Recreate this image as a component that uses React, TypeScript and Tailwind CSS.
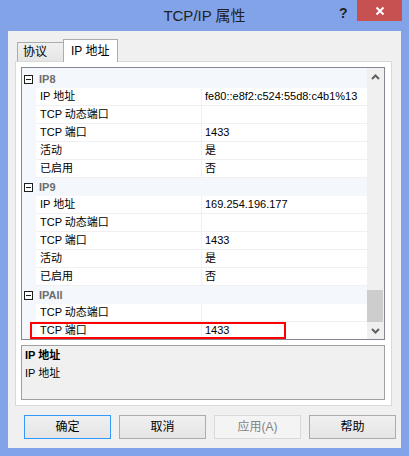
import React from "react";

const font = "font-['Liberation_Sans','Noto_Sans_CJK_SC',sans-serif]";

type Row = { name: string; value: string };
type Section = { title: string; rows: Row[] };

const sections: Section[] = [
  {
    title: "IP8",
    rows: [
      { name: "IP 地址", value: "fe80::e8f2:c524:55d8:c4b1%13" },
      { name: "TCP 动态端口", value: "" },
      { name: "TCP 端口", value: "1433" },
      { name: "活动", value: "是" },
      { name: "已启用", value: "否" },
    ],
  },
  {
    title: "IP9",
    rows: [
      { name: "IP 地址", value: "169.254.196.177" },
      { name: "TCP 动态端口", value: "" },
      { name: "TCP 端口", value: "1433" },
      { name: "活动", value: "是" },
      { name: "已启用", value: "否" },
    ],
  },
  {
    title: "IPAll",
    rows: [
      { name: "TCP 动态端口", value: "" },
      { name: "TCP 端口", value: "1433" },
    ],
  },
];

function Category({ title }: { title: string }) {
  return (
    <div className="flex h-[18px] items-center bg-[#f4f7fc]">
      <div className="ml-[2px] mr-[6px] flex h-[9px] w-[9px] items-center justify-center border border-[#1e1e1e] bg-white">
        <div className="h-[1px] w-[5px] bg-[#1e1e1e]" />
      </div>
      <span className="text-[11px] font-bold text-[#6d6d6d]">{title}</span>
    </div>
  );
}

function PropRow({ row }: { row: Row }) {
  return (
    <div className="flex h-[18px]">
      <div className="w-[14px] bg-[#f4f7fc]" />
      <div className="flex w-[166px] items-center border-b border-r border-[#f0f0f0] bg-white pl-[4px] text-[11px] text-black">
        {row.name}
      </div>
      <div className="flex flex-1 items-center border-b border-[#f0f0f0] bg-white pl-[3px] text-[11px] text-black">
        {row.value}
      </div>
    </div>
  );
}

function Chevron({ up }: { up?: boolean }) {
  return (
    <svg width="9" height="6" viewBox="0 0 9 6">
      <path
        d={up ? "M1 5 L4.5 1.5 L8 5" : "M1 1 L4.5 4.5 L8 1"}
        fill="none"
        stroke="#606060"
        strokeWidth="2"
      />
    </svg>
  );
}

function Button({ label, primary, disabled }: { label: string; primary?: boolean; disabled?: boolean }) {
  const cls = disabled
    ? "border-[#d9d9d9] bg-[#f4f4f4] text-[#838383]"
    : primary
    ? "border-[#3399ff] bg-gradient-to-b from-[#f0f0f0] to-[#e5e5e5] text-black"
    : "border-[#acacac] bg-gradient-to-b from-[#f0f0f0] to-[#e5e5e5] text-black";
  return (
    <div className={`flex h-[24px] w-[87px] items-center justify-center border text-[12px] ${cls}`}>
      {label}
    </div>
  );
}

export default function App() {
  return (
    <div className={`flex h-[456px] w-[409px] flex-col bg-[#83a3e8] ${font}`}>
      {/* title bar */}
      <div className="relative flex h-[31px] items-start justify-center">
        <span className="mt-[5px] text-[15px] text-[#222]">TCP/IP 属性</span>
        <span className="absolute left-[339px] top-[3px] text-[14px] font-bold text-[#222]">?</span>
        <div className="absolute left-[357px] top-0 flex h-[21px] w-[45px] items-center justify-center bg-[#c75050]">
          <svg width="10" height="10" viewBox="0 0 10 10">
            <path d="M1.5 1.5 L8.5 8.5 M8.5 1.5 L1.5 8.5" stroke="#fff" strokeWidth="2" />
          </svg>
        </div>
      </div>

      {/* client area */}
      <div className="mx-[8px] flex h-[417px] flex-col bg-[#f0f0f0]">
        {/* tabs */}
        <div className="ml-[9px] mt-[8px] flex h-[22px] items-end">
          <div className="-mr-px flex h-[19px] w-[47px] items-center border border-b-0 border-[#acacac] bg-gradient-to-b from-[#f0f0f0] to-[#e5e5e5] pl-[5px] text-[12px] text-black">
            协议
          </div>
          <div className="relative z-10 -mb-px flex h-[23px] w-[55px] items-center border border-b-0 border-[#acacac] bg-white pl-[7px] text-[12px] text-black">
            IP 地址
          </div>
        </div>

        {/* tab panel */}
        <div className="ml-[7px] flex h-[345px] w-[377px] flex-col gap-[5px] border border-[#d9d9d9] bg-white p-[5px]">
          {/* property grid */}
          <div className="relative flex h-[273px] w-[364px] border border-[#828790] bg-white">
            <div className="h-full w-[345px] overflow-hidden">
              <div className="h-[2px] bg-[#f4f7fc]" />
              {sections.map((s) => (
                <div key={s.title}>
                  <Category title={s.title} />
                  {s.rows.map((r, i) => (
                    <PropRow key={i} row={r} />
                  ))}
                </div>
              ))}
            </div>
            {/* scrollbar */}
            <div className="flex h-full w-[17px] flex-col bg-[#f0f0f0]">
              <div className="flex h-[17px] items-center justify-center">
                <Chevron up />
              </div>
              <div className="flex flex-1 flex-col justify-end">
                <div className="mb-0 ml-0 h-[32px] w-[16px] bg-[#cdcdcd]" />
              </div>
              <div className="flex h-[17px] items-center justify-center">
                <Chevron />
              </div>
            </div>
            {/* highlight box */}
            <div className="absolute left-[8px] top-[254px] h-[17px] w-[256px] border-2 border-[#ff0000]" />
          </div>

          {/* description */}
          <div className="flex h-[55px] w-[364px] flex-col border border-[#a0a0a0] bg-[#f0f0f0] pl-[3px] text-[11px] leading-[18px] text-black">
            <span className="font-bold">IP 地址</span>
            <span>IP 地址</span>
          </div>
        </div>

        {/* buttons */}
        <div className="ml-[16px] mt-[9px] flex gap-[8px]">
          <Button label="确定" primary />
          <Button label="取消" />
          <Button label="应用(A)" disabled />
          <Button label="帮助" />
        </div>
      </div>
    </div>
  );
}
